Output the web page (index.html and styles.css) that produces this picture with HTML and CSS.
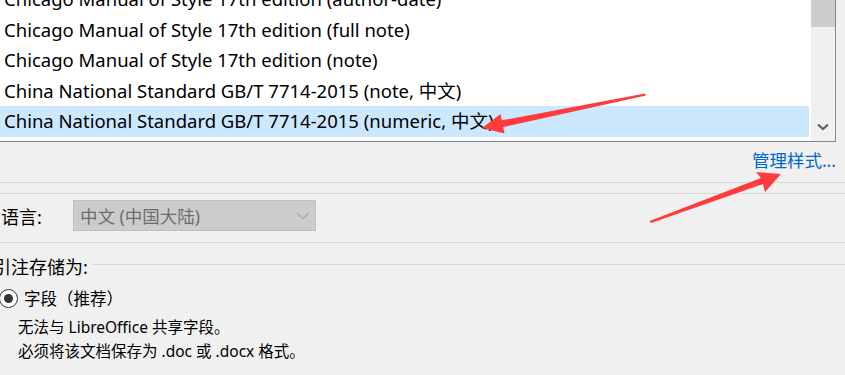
FILE: index.html
```html
<!DOCTYPE html>
<html lang="zh-CN">
<head>
  <meta charset="UTF-8" />
  <title>引注选项</title>
  <link rel="stylesheet" href="styles.css">
</head>
<body>

<!-- Style list -->
<div class="style-list">
  <ul class="rows">
    <li>Chicago Manual of Style 17th edition (author-date)</li>
    <li>Chicago Manual of Style 17th edition (full note)</li>
    <li>Chicago Manual of Style 17th edition (note)</li>
    <li>China National Standard GB/T 7714-2015 (note, 中文)</li>
    <li class="selected">China National Standard GB/T 7714-2015 (numeric, 中文)</li>
  </ul>
  <div class="scrollbar">
    <div class="thumb"></div>
    <svg class="scroll-down" width="12" height="8" viewBox="0 0 12 8">
      <path d="M1 1.5 L6 6 L11 1.5" fill="none" stroke="#606060" stroke-width="2.2" />
    </svg>
  </div>
</div>

<div class="manage-row">
  <a class="manage-link" href="#">管理样式...</a>
</div>

<div class="rule"></div>
<div class="rule second"></div>

<!-- Language -->
<div class="lang-row">
  <span class="label">语言:</span>
  <div class="select disabled">
    <span>中文 (中国大陆)</span>
    <svg width="14" height="8" viewBox="0 0 14 8">
      <path d="M1 1 L7 6.5 L13 1" fill="none" stroke="#a8a8a8" stroke-width="1.2" />
    </svg>
  </div>
</div>

<div class="rule"></div>

<!-- Store citations as -->
<div class="store-row">
  <span class="label store-label">引注存储为:</span>
  <div class="group-line"></div>
</div>

<div class="radio-row">
  <span class="radio checked"></span>
  <span class="radio-text">字段（推荐）</span>
</div>
<div class="desc">
  <div>无法与 LibreOffice 共享字段。</div>
  <div>必须将该文档保存为 .doc 或 .docx 格式。</div>
</div>

<!-- Annotation arrows -->
<svg class="arrows" width="845" height="375" viewBox="0 0 845 375">
  <polygon fill="#ff3b3b" points="645,93.5 501.8,120.3 500.5,113.9 482,128 504.5,133.5 503.2,127.1 646,95.5" />
  <polygon fill="#ff3b3b" points="649.5,221 761,178 756,172 781,174 765,192 763,184 651,223" />
</svg>

</body>
</html>
```

FILE: styles.css
```css
html, body {
  margin: 0;
  padding: 0;
  height: 100%;
  overflow: hidden;
}

body {
  position: relative;
  background-color: #f0f0f0;
  font-family: "Noto Sans", "Noto Sans CJK SC", sans-serif;
  color: #000;
}

/* list box */
.style-list {
  display: flex;
  width: 835px;
  height: 157px;
  margin-top: -16px;
  background-color: #fff;
  border-right: 1px solid #828790;
  border-bottom: 1px solid #828790;
}

.rows {
  list-style: none;
  margin: 0;
  padding: 0;
  width: 809px;
  margin-right: 2px;
}

.rows li {
  height: 30.5px;
  line-height: 30.5px;
  padding-left: 4px;
  font-size: 18.5px;
  white-space: nowrap;
  overflow: hidden;
}

.rows li.selected {
  background-color: #cce8ff;
}

.scrollbar {
  position: relative;
  width: 24px;
  background-color: #f0f0f0;
  display: flex;
  flex-direction: column;
  justify-content: space-between;
  align-items: center;
}

.thumb {
  width: 24px;
  height: 43px;
  background-color: #cdcdcd;
}

.scroll-down {
  margin-bottom: 10px;
}

/* manage link */
.manage-row {
  display: flex;
  justify-content: flex-end;
  width: 836px;
  height: 40px;
}

.manage-link {
  line-height: 36px;
  font-size: 17.5px;
  color: #0066cc;
  text-decoration: none;
}

.rule {
  height: 1px;
  background-color: #d9d9d9;
}

.rule.second {
  margin-top: 10px;
}

/* language */
.lang-row {
  display: flex;
  align-items: center;
  padding: 6px 0 11px;
}

.label {
  font-size: 18px;
  width: 72px;
  padding-left: 1px;
}

.select {
  display: flex;
  align-items: center;
  justify-content: space-between;
  box-sizing: border-box;
  width: 243px;
  height: 31px;
  padding: 0 5px 0 6px;
  border: 1px solid #bfbfbf;
  background-color: #cccccc;
  font-size: 17.5px;
  color: #6d6d6d;
}

/* citation storage */
.store-row {
  display: flex;
  align-items: center;
  height: 46px;
}

.store-label {
  width: auto;
  margin-left: -7px;
  padding-left: 0;
  white-space: nowrap;
}

.group-line {
  flex: 1;
  height: 1px;
  margin-left: 4px;
  margin-bottom: 4px;
  background-color: #d9d9d9;
}

.radio-row {
  display: flex;
  align-items: center;
  height: 18px;
}

.radio {
  box-sizing: border-box;
  width: 19px;
  height: 19px;
  margin-left: -1px;
  border: 1.5px solid #333;
  border-radius: 50%;
  background-color: #fff;
  display: flex;
  align-items: center;
  justify-content: center;
}

.radio.checked::after {
  content: "";
  width: 9px;
  height: 9px;
  border-radius: 50%;
  background-color: #333;
}

.radio-text {
  margin-left: 6px;
  font-size: 16.5px;
}

.desc {
  margin-top: 8px;
  padding-left: 18px;
  font-size: 15.5px;
  line-height: 24px;
}

/* red annotation arrows */
.arrows {
  position: absolute;
  left: 0;
  top: 0;
  pointer-events: none;
}
```
